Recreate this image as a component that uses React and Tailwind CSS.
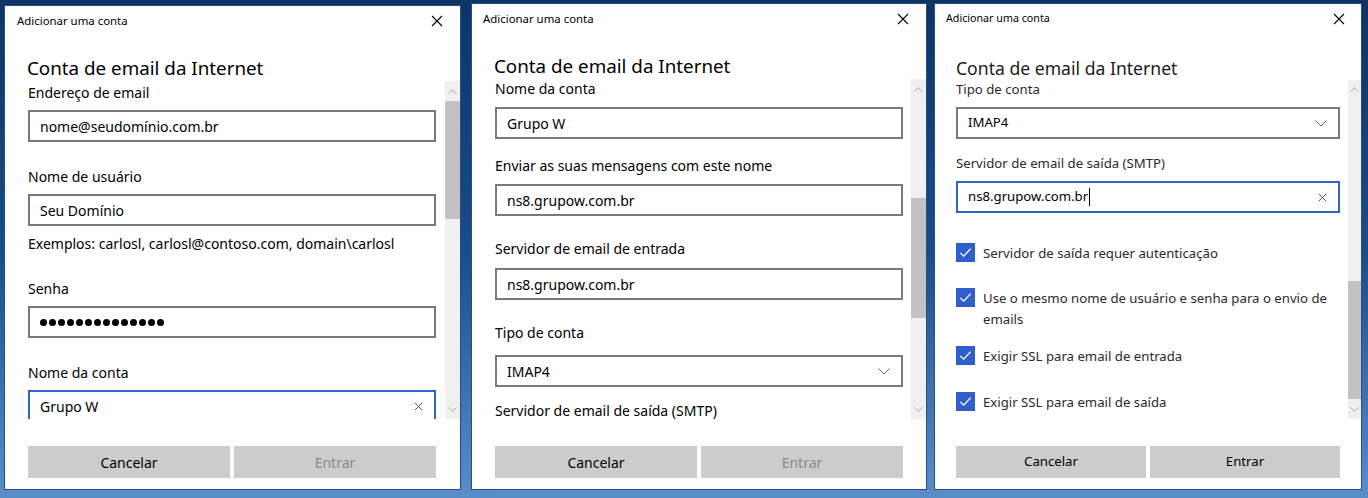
import React from 'react';

const FONT = "font-['Noto_Sans',sans-serif]";

function XIcon({ className, stroke = 1.1 }) {
  return (
    <svg viewBox="0 0 12 12" className={className} fill="none" stroke="currentColor" strokeWidth={stroke}>
      <path d="M1 1L11 11M11 1L1 11" />
    </svg>
  );
}

function ChevronDown({ className }) {
  return (
    <svg viewBox="0 0 12 7" className={className} fill="none" stroke="currentColor" strokeWidth="1">
      <path d="M0.5 0.5L6 6L11.5 0.5" />
    </svg>
  );
}

function ChevronUp({ className }) {
  return (
    <svg viewBox="0 0 12 7" className={className} fill="none" stroke="currentColor" strokeWidth="1">
      <path d="M0.5 6.5L6 1L11.5 6.5" />
    </svg>
  );
}

function Scrollbar({ spacer, thumb, width }) {
  return (
    <div className={`flex flex-col bg-[#f0f0f0] ${width}`}>
      <div className="flex h-[20px] items-center justify-center text-[#8c8c8c]">
        <ChevronUp className="h-[5px] w-[9px]" />
      </div>
      <div className={spacer} />
      <div className={`bg-[#c2c2c2] ${thumb}`} />
      <div className="flex-1" />
      <div className="flex h-[20px] items-center justify-center text-[#8c8c8c]">
        <ChevronDown className="h-[5px] w-[9px]" />
      </div>
    </div>
  );
}

function TextBox({ value, focused, clear, cursor, className = '' }) {
  return (
    <div
      className={`flex h-[32px] items-center border-2 pl-[10px] pr-[11px] ${
        focused ? 'border-[#2f66c4]' : 'border-[#7a7a7a]'
      } ${className}`}
    >
      <span className="flex flex-1 items-center">
        {value}
        {cursor && <span className="ml-[1px] h-[18px] w-[1px] bg-black" />}
      </span>
      {clear && <XIcon className="h-[9px] w-[9px] text-[#444]" stroke={1.2} />}
    </div>
  );
}

function SelectBox({ value, className = '' }) {
  return (
    <div className={`flex h-[32px] items-center border-2 border-[#7a7a7a] pl-[10px] pr-[11px] ${className}`}>
      <span className="flex-1">{value}</span>
      <ChevronDown className="h-[7px] w-[12px] text-[#666]" />
    </div>
  );
}

function PasswordBox({ count, className = '' }) {
  return (
    <div className={`flex h-[32px] items-center gap-[2px] border-2 border-[#7a7a7a] pl-[10px] ${className}`}>
      {Array.from({ length: count }).map((_, i) => (
        <span key={i} className="h-[7px] w-[7px] rounded-full bg-black" />
      ))}
    </div>
  );
}

function Check({ children, className = '' }) {
  return (
    <div className={`flex items-start gap-[8px] ${className}`}>
      <span className="flex h-[19px] w-[19px] shrink-0 items-center justify-center bg-[#2f5fcb]">
        <svg viewBox="0 0 14 14" className="h-[13px] w-[13px]" fill="none" stroke="white" strokeWidth="1.3">
          <path d="M1.5 7.5L5 11L12.5 3" />
        </svg>
      </span>
      <span className="leading-[21px] text-[#2a2a2a]">{children}</span>
    </div>
  );
}

function Panel({ className, title, titleSize, headingClass, pad, scrollH, content, scrollbar, footerPad, entrarEnabled, buttonText }) {
  return (
    <div className={`flex flex-col border border-[#1f4f8f] bg-white text-black ${className}`}>
      <div className={`flex h-[29px] items-center justify-between ${pad.title}`}>
        <span className={titleSize}>{title}</span>
        <XIcon className="h-[12px] w-[12px] text-black" />
      </div>
      <h1 className={headingClass}>Conta de email da Internet</h1>
      <div className={`flex overflow-hidden ${scrollH}`}>
        <div className={`flex flex-1 flex-col ${pad.content}`}>{content}</div>
        {scrollbar}
      </div>
      <div className={`flex gap-[4px] pt-[27px] pb-[11px] ${footerPad}`}>
        <div className={`flex h-[32px] flex-1 items-center justify-center bg-[#cccccc] text-black ${buttonText}`}>Cancelar</div>
        <div
          className={`flex h-[32px] flex-1 items-center justify-center bg-[#cccccc] ${buttonText} ${
            entrarEnabled ? 'text-black' : 'text-[#8a8a8a]'
          }`}
        >
          Entrar
        </div>
      </div>
    </div>
  );
}

export default function App() {
  const label = 'h-[20px] leading-[20px] text-[14px]';
  const label3 = 'h-[18px] leading-[18px] text-[13.2px] text-[#2a2a2a]';

  return (
    <div className={`flex h-[498px] w-[1368px] items-start overflow-hidden bg-linear-to-b from-[#0e3466] via-[#1a4c88] to-[#5a8ecb] ${FONT}`}>
      <Panel
        className="mt-[5px] ml-[4px] w-[457px]"
        title="Adicionar uma conta"
        titleSize="text-[11.4px]"
        headingClass="mt-[20px] pl-[22px] text-[18.8px] leading-[26px] font-normal"
        pad={{ title: 'pl-[12px] pr-[17px]', content: 'pl-[23px] pr-[9px] pt-[2px] text-[14px]' }}
        scrollH="h-[338px]"
        footerPad="pl-[23px] pr-[24px]"
        buttonText="text-[14px]"
        scrollbar={<Scrollbar width="w-[15px]" spacer="h-0" thumb="h-[118px]" />}
        content={
          <>
            <div className={label}>Endereço de email</div>
            <TextBox className="mt-[7px] shrink-0" value="nome@seudomínio.com.br" />
            <div className={`mt-[25px] ${label}`}>Nome de usuário</div>
            <TextBox className="mt-[7px] shrink-0" value="Seu Domínio" />
            <div className={`mt-[8px] ${label}`}>Exemplos: carlosl, carlosl@contoso.com, domain\carlosl</div>
            <div className={`mt-[25px] ${label}`}>Senha</div>
            <PasswordBox className="mt-[7px] shrink-0" count={14} />
            <div className={`mt-[25px] ${label}`}>Nome da conta</div>
            <TextBox className="mt-[7px] shrink-0" value="Grupo W" focused clear />
          </>
        }
      />
      <Panel
        className="mt-[3px] ml-[10px] w-[456px]"
        title="Adicionar uma conta"
        titleSize="text-[11.4px]"
        headingClass="mt-[20px] pl-[22px] text-[18.8px] leading-[26px] font-normal"
        pad={{ title: 'pl-[11px] pr-[17px]', content: 'pl-[23px] pr-[8px] text-[14px]' }}
        scrollH="h-[340px]"
        footerPad="pl-[23px] pr-[23px]"
        buttonText="text-[14px]"
        scrollbar={<Scrollbar width="w-[15px]" spacer="h-[99px]" thumb="h-[120px]" />}
        content={
          <>
            <div className={label}>Nome da conta</div>
            <TextBox className="mt-[8px] h-[31px] shrink-0" value="Grupo W" />
            <div className={`mt-[17px] ${label}`}>Enviar as suas mensagens com este nome</div>
            <TextBox className="mt-[8px] h-[31px] shrink-0" value="ns8.grupow.com.br" />
            <div className={`mt-[23px] ${label}`}>Servidor de email de entrada</div>
            <TextBox className="mt-[9px] h-[31px] shrink-0" value="ns8.grupow.com.br" />
            <div className={`mt-[23px] ${label}`}>Tipo de conta</div>
            <SelectBox className="mt-[12px] h-[31px] shrink-0" value="IMAP4" />
            <div className={`mt-[14px] ${label}`}>Servidor de email de saída (SMTP)</div>
          </>
        }
      />
      <Panel
        className="mt-[3px] ml-[7px] w-[428px]"
        title="Adicionar uma conta"
        titleSize="text-[10.7px]"
        headingClass="mt-[23px] pl-[21px] text-[17.6px] leading-[24px] font-normal text-[#1a1a1a]"
        pad={{ title: 'pl-[11px] pr-[16px]', content: 'pl-[21px] pr-[8px] text-[13.2px]' }}
        scrollH="h-[339px]"
        footerPad="pl-[21px] pr-[21px]"
        buttonText="text-[13.2px] text-[#222]"
        entrarEnabled
        scrollbar={<Scrollbar width="w-[13px]" spacer="h-[183px]" thumb="h-[120px]" />}
        content={
          <>
            <div className={label3}>Tipo de conta</div>
            <SelectBox className="mt-[9px] h-[31px] shrink-0" value="IMAP4" />
            <div className={`mt-[15px] ${label3}`}>Servidor de email de saída (SMTP)</div>
            <TextBox className="mt-[9px] h-[31px] shrink-0" value="ns8.grupow.com.br" focused clear cursor />
            <Check className="mt-[30px]">Servidor de saída requer autenticação</Check>
            <Check className="mt-[24px]">
              Use o mesmo nome de usuário e senha para o envio de
              <br />
              emails
            </Check>
            <Check className="mt-[16px]">Exigir SSL para email de entrada</Check>
            <Check className="mt-[25px]">Exigir SSL para email de saída</Check>
          </>
        }
      />
    </div>
  );
}
